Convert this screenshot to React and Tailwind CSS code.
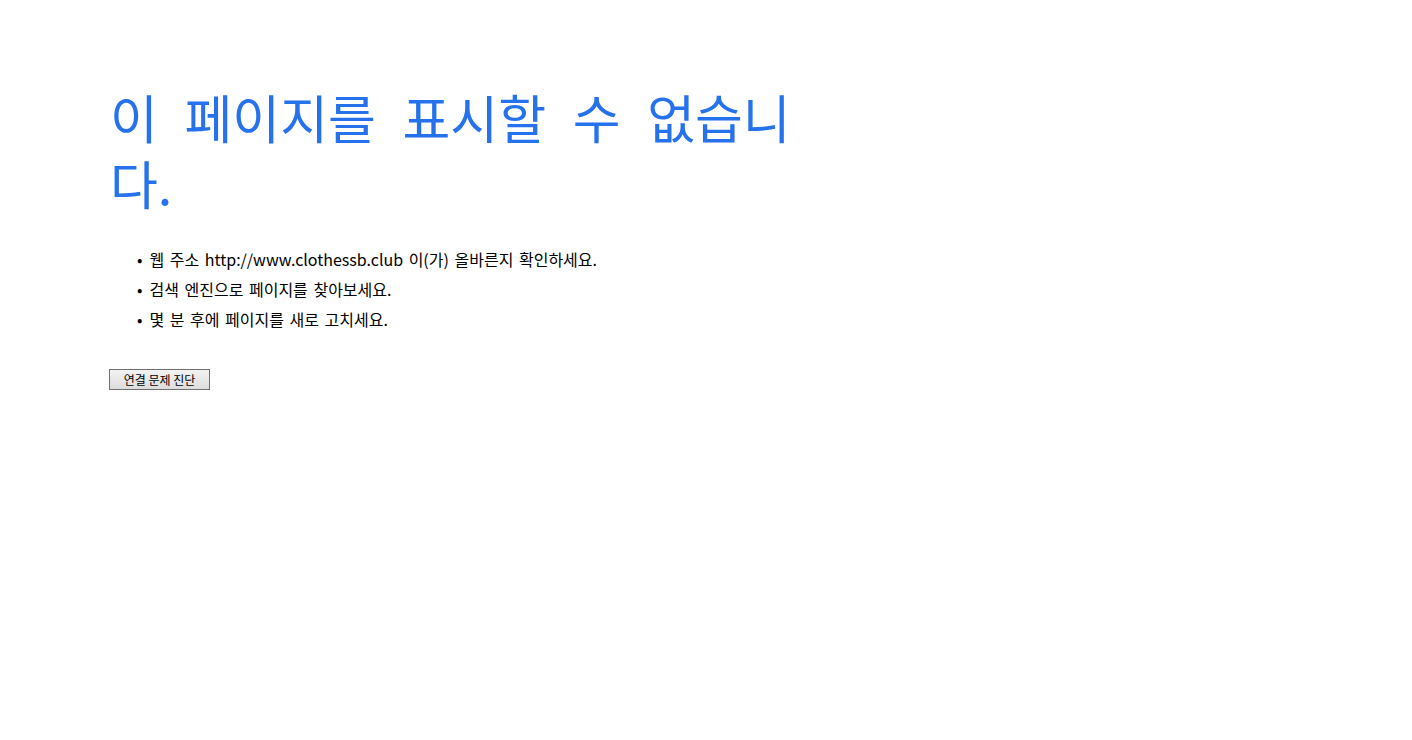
export default function App() {
  return (
    <div className="min-h-screen bg-white pl-[110px] pt-[84px] font-['Noto_Sans_CJK_KR','Noto_Sans',sans-serif]">
      <h1 className="w-[700px] text-[52px] leading-[66px] font-normal text-[#2672ec] [word-spacing:15px]">
        이 페이지를 표시할 수 없습니다.
      </h1>
      <ul className="mt-[28px] pl-[27px] text-[16px] leading-[30px] text-black [word-spacing:2px]">
        <li className="flex gap-[7px]"><span>•</span><span>웹 주소 http://www.clothessb.club 이(가) 올바른지 확인하세요.</span></li>
        <li className="flex gap-[7px]"><span>•</span><span>검색 엔진으로 페이지를 찾아보세요.</span></li>
        <li className="flex gap-[7px]"><span>•</span><span>몇 분 후에 페이지를 새로 고치세요.</span></li>
      </ul>
      <button className="mt-[35px] -ml-px h-[21px] w-[101px] border border-[#707070] bg-gradient-to-b from-[#f2f2f2] to-[#dddddd] text-[12px] leading-none text-black">
        연결 문제 진단
      </button>
    </div>
  );
}
